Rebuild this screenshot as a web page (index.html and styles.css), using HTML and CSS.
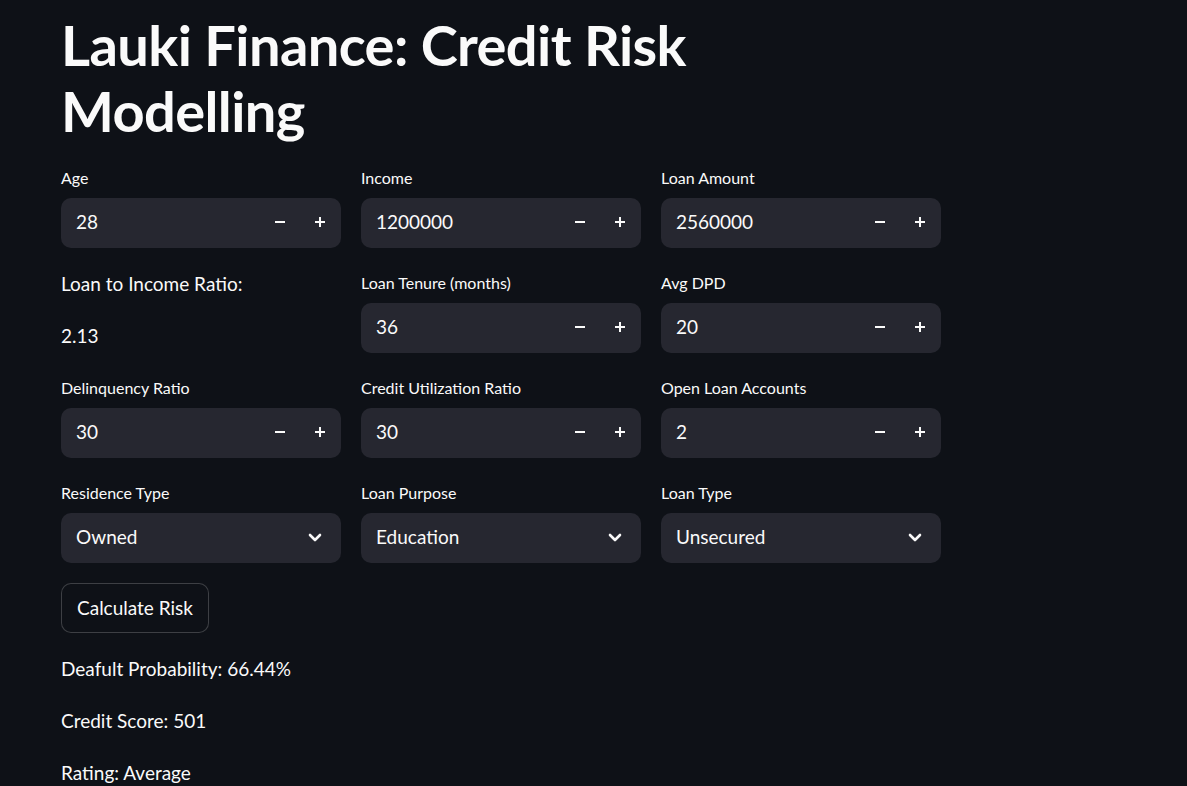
FILE: index.html
```html
<!DOCTYPE html>
<html lang="en">
<head>
<meta charset="utf-8">
<title>Lauki Finance: Credit Risk Modelling</title>
<link rel="stylesheet" href="styles.css">
</head>
<body>
<main class="main">
  <h1 class="title">Lauki Finance: Credit Risk<br>Modelling</h1>

  <div class="grid">
    <div class="field">
      <label class="label">Age</label>
      <div class="num"><span class="val">28</span><span class="step minus"></span><span class="step plus"></span></div>
    </div>
    <div class="field">
      <label class="label">Income</label>
      <div class="num"><span class="val">1200000</span><span class="step minus"></span><span class="step plus"></span></div>
    </div>
    <div class="field">
      <label class="label">Loan Amount</label>
      <div class="num"><span class="val">2560000</span><span class="step minus"></span><span class="step plus"></span></div>
    </div>

    <div class="field text-col">
      <p class="text">Loan to Income Ratio:</p>
      <p class="text">2.13</p>
    </div>
    <div class="field">
      <label class="label">Loan Tenure (months)</label>
      <div class="num"><span class="val">36</span><span class="step minus"></span><span class="step plus"></span></div>
    </div>
    <div class="field">
      <label class="label">Avg DPD</label>
      <div class="num"><span class="val">20</span><span class="step minus"></span><span class="step plus"></span></div>
    </div>

    <div class="field">
      <label class="label">Delinquency Ratio</label>
      <div class="num"><span class="val">30</span><span class="step minus"></span><span class="step plus"></span></div>
    </div>
    <div class="field">
      <label class="label">Credit Utilization Ratio</label>
      <div class="num"><span class="val">30</span><span class="step minus"></span><span class="step plus"></span></div>
    </div>
    <div class="field">
      <label class="label">Open Loan Accounts</label>
      <div class="num"><span class="val">2</span><span class="step minus"></span><span class="step plus"></span></div>
    </div>

    <div class="field">
      <label class="label">Residence Type</label>
      <div class="select"><span class="val">Owned</span><svg class="chev" width="14" height="9" viewBox="0 0 14 9"><path d="M2 2l5 5 5-5" fill="none" stroke="#fafafa" stroke-width="2.6" stroke-linecap="round" stroke-linejoin="round"/></svg></div>
    </div>
    <div class="field">
      <label class="label">Loan Purpose</label>
      <div class="select"><span class="val">Education</span><svg class="chev" width="14" height="9" viewBox="0 0 14 9"><path d="M2 2l5 5 5-5" fill="none" stroke="#fafafa" stroke-width="2.6" stroke-linecap="round" stroke-linejoin="round"/></svg></div>
    </div>
    <div class="field">
      <label class="label">Loan Type</label>
      <div class="select"><span class="val">Unsecured</span><svg class="chev" width="14" height="9" viewBox="0 0 14 9"><path d="M2 2l5 5 5-5" fill="none" stroke="#fafafa" stroke-width="2.6" stroke-linecap="round" stroke-linejoin="round"/></svg></div>
    </div>
  </div>

  <div class="block">
    <button class="btn">Calculate Risk</button>
    <p class="text">Deafult Probability: 66.44%</p>
    <p class="text">Credit Score: 501</p>
    <p class="text">Rating: Average</p>
  </div>
</main>
</body>
</html>
```

FILE: styles.css
```css
html, body {
  margin: 0;
  padding: 0;
  background: #0e1117;
  color: #fafafa;
  font-family: Lato, "Noto Sans", "Liberation Sans", sans-serif;
}

.main {
  width: 880px;
  padding: 12px 0 0 61px;
}

.title {
  margin: 0 0 19px 0;
  font-size: 56px;
  line-height: 66px;
  font-weight: 700;
  letter-spacing: -0.6px;
}

.grid {
  display: grid;
  grid-template-columns: repeat(3, 280px);
  column-gap: 20px;
  row-gap: 20px;
}

.field {
  display: flex;
  flex-direction: column;
}

.text-col {
  gap: 20px;
}

.label {
  font-size: 16px;
  line-height: 30px;
  height: 30px;
  margin-bottom: 5px;
}

.num, .select {
  height: 50px;
  background: #262730;
  border-radius: 10px;
  display: flex;
  align-items: center;
  font-size: 19px;
}

.val {
  flex: 1;
  padding-left: 15px;
  padding-bottom: 3px;
}

.step {
  width: 40px;
  height: 50px;
  position: relative;
}

.step::before,
.step.plus::after {
  content: "";
  position: absolute;
  left: 14px;
  top: 23px;
  width: 10px;
  height: 2px;
  background: #fafafa;
}

.step.plus::after {
  left: 18px;
  top: 19px;
  width: 2px;
  height: 10px;
}

.chev {
  margin-right: 19px;
  margin-bottom: 1px;
}

.text {
  margin: 0;
  font-size: 19px;
  line-height: 32px;
}

.block {
  margin-top: 20px;
  display: flex;
  flex-direction: column;
  align-items: flex-start;
  gap: 20px;
}

.btn {
  height: 50px;
  padding: 0 15px 2px;
  background: #0e1117;
  color: #fafafa;
  border: 1px solid rgba(250, 250, 250, 0.2);
  border-radius: 10px;
  font-family: inherit;
  font-size: 19px;
}
```
